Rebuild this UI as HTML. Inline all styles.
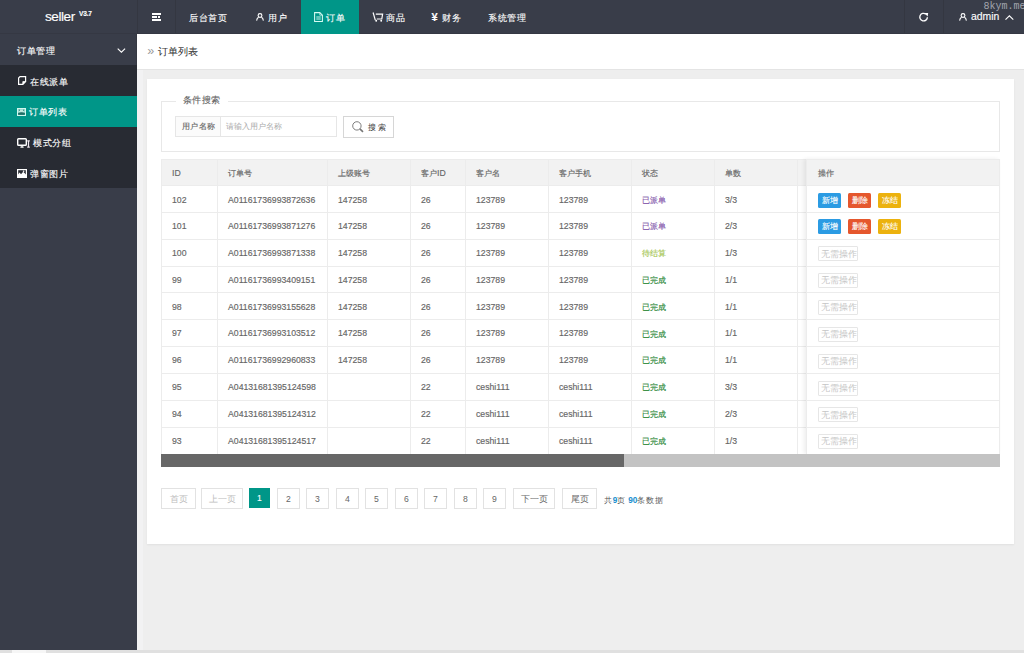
<!DOCTYPE html><html><head><meta charset="utf-8"><style>
*{box-sizing:border-box;margin:0;padding:0}
html,body{width:1024px;height:653px;overflow:hidden;background:#eeeeee;font-family:"Liberation Sans",sans-serif;}
.a{position:absolute}
.t{position:absolute;white-space:nowrap;line-height:1}
.sw{-webkit-text-stroke:0.12px #fff;color:#fff}
svg{position:absolute;overflow:visible}
</style></head><body>
<div class="a" style="left:0;top:0;width:1024px;height:34px;background:#393D49"></div>
<div class="a" style="left:0;top:33px;width:1024px;height:1px;background:#353843"></div>
<div class="t sw" style="left:45px;top:9.8px;font-size:13.6px;letter-spacing:-0.45px">seller</div>
<div class="t sw" style="left:79px;top:11px;font-size:6.6px;font-weight:bold;letter-spacing:-0.2px">V3.7</div>
<div class="a" style="left:137px;top:0;width:1px;height:33px;background:#343741"></div>
<div class="a" style="left:175px;top:0;width:1px;height:33px;background:#343741"></div>
<div class="a" style="left:904px;top:0;width:1px;height:33px;background:#343741"></div>
<div class="a" style="left:943px;top:0;width:1px;height:33px;background:#343741"></div>
<div class="a" style="left:152px;top:13px;width:9px;height:1.7px;background:#fff"></div>
<div class="a" style="left:152px;top:16.2px;width:5px;height:1.8px;background:#fff"></div>
<div class="a" style="left:158px;top:16.2px;width:2.2px;height:1.8px;background:#fff"></div>
<div class="a" style="left:152px;top:19.4px;width:9px;height:1.8px;background:#fff"></div>
<div class="a" style="left:301px;top:0;width:58px;height:34px;background:#009688"></div>
<div class="t sw" style="left:189px;top:12.6px;font-size:9.6px;transform:scale(0.96);transform-origin:0 50%">后台首页</div>
<div class="t sw" style="left:268px;top:12.6px;font-size:9.6px;transform:scale(0.96);transform-origin:0 50%">用户</div>
<div class="t sw" style="left:326px;top:12.6px;font-size:9.6px;transform:scale(0.96);transform-origin:0 50%">订单</div>
<div class="t sw" style="left:386px;top:12.6px;font-size:9.6px;transform:scale(0.96);transform-origin:0 50%">商品</div>
<div class="t sw" style="left:441.5px;top:12.6px;font-size:9.6px;transform:scale(0.96);transform-origin:0 50%">财务</div>
<div class="t sw" style="left:488px;top:12.6px;font-size:9.6px;transform:scale(0.96);transform-origin:0 50%">系统管理</div>
<svg style="left:256px;top:13px" width="8" height="8" viewBox="0 0 8 8"><circle cx="4" cy="2.5" r="1.9" fill="none" stroke="#fff" stroke-width="1.1"/><path d="M0.6 7.6 Q1 5 2.6 4.3 M7.4 7.6 Q7 5 5.4 4.3" fill="none" stroke="#fff" stroke-width="1.1"/></svg>
<svg style="left:314px;top:11.8px" width="9" height="10" viewBox="0 0 9 10"><path d="M0.6 0.6 H5.8 L8.4 3.2 V9.4 H0.6 Z" fill="none" stroke="#d6fbf3" stroke-width="1.05"/><path d="M5.8 0.6 V3.2 H8.4" fill="none" stroke="#d6fbf3" stroke-width="0.7"/><path d="M2.3 5 H6.7 M2.3 7 H6.7" stroke="#c8f3ea" stroke-width="1"/></svg>
<svg style="left:372px;top:12px" width="12" height="10" viewBox="0 0 12 10"><path d="M1.1 0.5 L3.3 8.2" fill="none" stroke="#fff" stroke-width="1.2"/><path d="M3.8 2.2 H10.6 L9.8 7.0 H4.8" fill="none" stroke="#fff" stroke-width="1.2"/><circle cx="4.2" cy="8.7" r="0.95" fill="#fff"/><circle cx="9.2" cy="8.7" r="0.95" fill="#fff"/></svg>
<div class="t sw" style="left:431.5px;top:11.6px;font-size:11px;font-weight:bold">¥</div>
<svg style="left:919px;top:12.4px" width="10" height="10" viewBox="0 0 10 10"><path d="M8.4 5.2 A3.8 3.8 0 1 1 6.9 2.1" fill="none" stroke="#fff" stroke-width="1.35"/><path d="M5.4 1.0 L9.2 0.9 L8.6 4.4 Z" fill="#fff"/></svg>
<svg style="left:958.5px;top:13px" width="8" height="8" viewBox="0 0 8 8"><circle cx="4" cy="2.5" r="1.9" fill="none" stroke="#fff" stroke-width="1.1"/><path d="M0.6 7.6 Q1 5 2.6 4.3 M7.4 7.6 Q7 5 5.4 4.3" fill="none" stroke="#fff" stroke-width="1.1"/></svg>
<div class="t sw" style="left:971px;top:12.4px;font-size:10.4px">admin</div>
<svg style="left:1004.5px;top:15px" width="9" height="5" viewBox="0 0 9 5"><path d="M0.5 4.6 L4.4 0.8 L8.3 4.6" fill="none" stroke="#fff" stroke-width="1.1"/></svg>
<div class="t" style="left:983.5px;top:1.5px;font-size:10px;font-family:'Liberation Mono',monospace;color:#a3a6ae">8kym.me</div>
<div class="a" style="left:0;top:34px;width:137px;height:617px;background:#393D49"></div>
<div class="a" style="left:0;top:65px;width:137px;height:123px;background:#282B33"></div>
<div class="a" style="left:0;top:96px;width:137px;height:31px;background:#009688"></div>
<div class="a" style="left:136px;top:34px;width:1px;height:31px;background:#353842"></div>
<div class="t sw" style="left:17px;top:45.8px;font-size:9.6px;transform:scale(0.95);transform-origin:0 50%">订单管理</div>
<svg style="left:117.4px;top:47.8px" width="10" height="6" viewBox="0 0 10 6"><path d="M0.7 0.7 L4.4 4.2 L8.1 0.7" fill="none" stroke="#fff" stroke-width="1.1"/></svg>
<div class="t sw" style="left:30px;top:76.8px;font-size:9.6px;transform:scale(0.95);transform-origin:0 50%">在线派单</div>
<div class="t sw" style="left:29px;top:107.4px;font-size:9.6px;transform:scale(0.95);transform-origin:0 50%">订单列表</div>
<div class="t sw" style="left:33px;top:138px;font-size:9.6px;transform:scale(0.95);transform-origin:0 50%">模式分组</div>
<div class="t sw" style="left:30px;top:168.8px;font-size:9.6px;transform:scale(0.95);transform-origin:0 50%">弹窗图片</div>
<svg style="left:17.7px;top:76.2px" width="9" height="9" viewBox="0 0 9 9"><path d="M2 0.6 H7.6 V5.6 L4.8 8.4 H0.6 V2 Z" fill="none" stroke="#fff" stroke-width="1.2"/><path d="M4.8 8.4 V5.6 H7.6 Z" fill="#fff" stroke="#fff" stroke-width="0.8"/></svg>
<svg style="left:17px;top:108px" width="9" height="8" viewBox="0 0 9 8"><rect x="0.6" y="0.6" width="7.8" height="6.8" fill="none" stroke="#d2f7ee" stroke-width="1.2"/><path d="M1.2 1.2 H7.8 V4.8 H1.2 Z" fill="#bfe9df"/><circle cx="2.4" cy="2.2" r="0.6" fill="#1f7f74"/><circle cx="6.6" cy="2.2" r="0.6" fill="#1f7f74"/><path d="M1.2 5 Q4.5 3.5 7.8 5 V6.8 H1.2 Z" fill="#246e66"/></svg>
<svg style="left:17px;top:137.5px" width="14" height="10" viewBox="0 0 14 10"><rect x="0.7" y="0.7" width="8.6" height="6.6" rx="0.8" fill="none" stroke="#fff" stroke-width="1.4"/><path d="M3.4 9.2 H6.6 M5 7.4 V9.2" stroke="#fff" stroke-width="1.2"/><path d="M10.2 2.8 H12.8 M11.5 2.8 V9.2 M10.2 9.2 H12.8" stroke="#f0e8f0" stroke-width="1.2"/></svg>
<svg style="left:17px;top:169px" width="10" height="9" viewBox="0 0 10 9"><rect x="0.6" y="0.6" width="8.8" height="7.8" fill="none" stroke="#fff" stroke-width="1.2"/><path d="M1 8 V5.6 L2.6 3.4 L4 5.2 L6.2 2.8 L9 5.4 V8 Z" fill="#fff"/><circle cx="6.6" cy="2.3" r="0.8" fill="#fff"/></svg>
<div class="a" style="left:137px;top:34px;width:887px;height:35px;background:#fff"></div>
<div class="a" style="left:137px;top:69px;width:887px;height:1px;background:#e4e4e4"></div>
<div class="t" style="left:147.2px;top:45.2px;font-size:12.5px;color:#999">»</div>
<div class="t" style="left:158px;top:46.6px;font-size:9.5px;color:#333;-webkit-text-stroke:0.05px #333">订单列表</div>
<div class="a" style="left:137px;top:70px;width:6px;height:580px;background:#f2f2f3"></div>
<div class="a" style="left:147px;top:79px;width:867px;height:464.5px;background:#fff;box-shadow:0 1px 2px rgba(0,0,0,.06)"></div>
<div class="a" style="left:161px;top:101px;width:839px;height:51px;border:1px solid #e8e8e8"></div>
<div class="a" style="left:176px;top:97px;width:52px;height:8px;background:#fff"></div>
<div class="t" style="left:182.5px;top:96.4px;font-size:10px;transform:scale(0.925);transform-origin:0 0;color:#666;-webkit-text-stroke:0.15px #666">条件搜索</div>
<div class="a" style="left:175px;top:116px;width:46px;height:21px;border:1px solid #e6e6e6;background:#FBFBFB"></div>
<div class="t" style="left:181.5px;top:122.2px;font-size:9px;transform:scale(0.935);transform-origin:0 0;color:#666;-webkit-text-stroke:0.15px #666">用户名称</div>
<div class="a" style="left:220px;top:116px;width:117px;height:21px;border:1px solid #e6e6e6;background:#fff"></div>
<div class="t" style="left:226px;top:121.8px;font-size:8.3px;color:#aaa">请输入用户名称</div>
<div class="a" style="left:343px;top:116px;width:51px;height:22px;border:1px solid #d6d6d6;background:#fff"></div>
<svg style="left:351.5px;top:120.5px" width="13" height="12" viewBox="0 0 13 12"><circle cx="4.9" cy="4.9" r="4.2" fill="none" stroke="#666" stroke-width="0.85"/><path d="M7.9 7.9 L11 10.8" stroke="#777" stroke-width="1.6"/></svg>
<div class="t" style="left:368px;top:122.8px;font-size:8.3px;color:#444;letter-spacing:2.4px;-webkit-text-stroke:0.05px #444">搜索</div>
<div class="a" style="left:161px;top:159px;width:839px;height:295px;border:1px solid #ececec;border-bottom:none"></div>
<div class="a" style="left:162px;top:160px;width:837px;height:26px;background:#f2f2f2"></div>
<div class="a" style="left:162px;top:185px;width:837px;height:1px;background:#ececec"></div>
<div class="a" style="left:162px;top:212px;width:837px;height:1px;background:#ececec"></div>
<div class="a" style="left:162px;top:239px;width:837px;height:1px;background:#ececec"></div>
<div class="a" style="left:162px;top:266px;width:837px;height:1px;background:#ececec"></div>
<div class="a" style="left:162px;top:292px;width:837px;height:1px;background:#ececec"></div>
<div class="a" style="left:162px;top:319px;width:837px;height:1px;background:#ececec"></div>
<div class="a" style="left:162px;top:346px;width:837px;height:1px;background:#ececec"></div>
<div class="a" style="left:162px;top:373px;width:837px;height:1px;background:#ececec"></div>
<div class="a" style="left:162px;top:400px;width:837px;height:1px;background:#ececec"></div>
<div class="a" style="left:162px;top:427px;width:837px;height:1px;background:#ececec"></div>
<div class="a" style="left:217px;top:159px;width:1px;height:295px;background:#ececec"></div>
<div class="a" style="left:327px;top:159px;width:1px;height:295px;background:#ececec"></div>
<div class="a" style="left:410px;top:159px;width:1px;height:295px;background:#ececec"></div>
<div class="a" style="left:465px;top:159px;width:1px;height:295px;background:#ececec"></div>
<div class="a" style="left:548px;top:159px;width:1px;height:295px;background:#ececec"></div>
<div class="a" style="left:631px;top:159px;width:1px;height:295px;background:#ececec"></div>
<div class="a" style="left:714px;top:159px;width:1px;height:295px;background:#ececec"></div>
<div class="a" style="left:797px;top:159px;width:1px;height:295px;background:#ececec"></div>
<div class="a" style="left:806px;top:159px;width:194px;height:295px;box-shadow:-2px 0 4px rgba(0,0,0,.07);border-left:1px solid #ececec"></div>
<div class="a" style="left:807px;top:160px;width:192px;height:26px;background:#f2f2f2"></div>
<div class="a" style="left:807px;top:185px;width:192px;height:1px;background:#ececec"></div>
<div class="a" style="left:807px;top:212px;width:192px;height:1px;background:#ececec"></div>
<div class="a" style="left:807px;top:239px;width:192px;height:1px;background:#ececec"></div>
<div class="a" style="left:807px;top:266px;width:192px;height:1px;background:#ececec"></div>
<div class="a" style="left:807px;top:292px;width:192px;height:1px;background:#ececec"></div>
<div class="a" style="left:807px;top:319px;width:192px;height:1px;background:#ececec"></div>
<div class="a" style="left:807px;top:346px;width:192px;height:1px;background:#ececec"></div>
<div class="a" style="left:807px;top:373px;width:192px;height:1px;background:#ececec"></div>
<div class="a" style="left:807px;top:400px;width:192px;height:1px;background:#ececec"></div>
<div class="a" style="left:807px;top:427px;width:192px;height:1px;background:#ececec"></div>
<div class="t" style="left:172px;top:168.6px;font-size:8.7px;color:#666;-webkit-text-stroke:0.15px #666">ID</div>
<div class="t" style="left:228px;top:168.6px;font-size:8.7px;color:#666;-webkit-text-stroke:0.15px #666"><span style="font-size:8.3px">订单号</span></div>
<div class="t" style="left:338px;top:168.6px;font-size:8.7px;color:#666;-webkit-text-stroke:0.15px #666"><span style="font-size:8.3px">上级账号</span></div>
<div class="t" style="left:421px;top:168.6px;font-size:8.7px;color:#666;-webkit-text-stroke:0.15px #666"><span style="font-size:8.3px">客户</span>ID</div>
<div class="t" style="left:476px;top:168.6px;font-size:8.7px;color:#666;-webkit-text-stroke:0.15px #666"><span style="font-size:8.3px">客户名</span></div>
<div class="t" style="left:559px;top:168.6px;font-size:8.7px;color:#666;-webkit-text-stroke:0.15px #666"><span style="font-size:8.3px">客户手机</span></div>
<div class="t" style="left:642px;top:168.6px;font-size:8.7px;color:#666;-webkit-text-stroke:0.15px #666"><span style="font-size:8.3px">状态</span></div>
<div class="t" style="left:725px;top:168.6px;font-size:8.7px;color:#666;-webkit-text-stroke:0.15px #666"><span style="font-size:8.3px">单数</span></div>
<div class="t" style="left:817.5px;top:168.6px;font-size:8.3px;color:#666;-webkit-text-stroke:0.15px #666">操作</div>
<div class="t" style="left:172px;top:195.6px;font-size:8.7px;color:#666;-webkit-text-stroke:0.15px #666">102</div>
<div class="t" style="left:228px;top:195.6px;font-size:8.7px;color:#666;-webkit-text-stroke:0.15px #666">A01161736993872636</div>
<div class="t" style="left:338px;top:195.6px;font-size:8.7px;color:#666;-webkit-text-stroke:0.15px #666">147258</div>
<div class="t" style="left:421px;top:195.6px;font-size:8.7px;color:#666;-webkit-text-stroke:0.15px #666">26</div>
<div class="t" style="left:476px;top:195.6px;font-size:8.7px;color:#666;-webkit-text-stroke:0.15px #666">123789</div>
<div class="t" style="left:559px;top:195.6px;font-size:8.7px;color:#666;-webkit-text-stroke:0.15px #666">123789</div>
<div class="t" style="left:642px;top:195.8px;font-size:8.3px;color:#8659ac;-webkit-text-stroke:0.15px #8659ac">已派单</div>
<div class="t" style="left:725px;top:195.6px;font-size:8.7px;color:#666;-webkit-text-stroke:0.15px #666">3/3</div>
<div class="a" style="left:818px;top:193.0px;width:23px;height:15px;background:#2b9be3;border-radius:1.5px"></div>
<div class="t sw" style="left:821.5px;top:196.6px;font-size:8px">新增</div>
<div class="a" style="left:848px;top:193.0px;width:23px;height:15px;background:#e5572d;border-radius:1.5px"></div>
<div class="t sw" style="left:851.5px;top:196.6px;font-size:8px">删除</div>
<div class="a" style="left:878px;top:193.0px;width:23px;height:15px;background:#ecb20e;border-radius:1.5px"></div>
<div class="t sw" style="left:881.5px;top:196.6px;font-size:8px">冻结</div>
<div class="t" style="left:172px;top:222.0px;font-size:8.7px;color:#666;-webkit-text-stroke:0.15px #666">101</div>
<div class="t" style="left:228px;top:222.0px;font-size:8.7px;color:#666;-webkit-text-stroke:0.15px #666">A01161736993871276</div>
<div class="t" style="left:338px;top:222.0px;font-size:8.7px;color:#666;-webkit-text-stroke:0.15px #666">147258</div>
<div class="t" style="left:421px;top:222.0px;font-size:8.7px;color:#666;-webkit-text-stroke:0.15px #666">26</div>
<div class="t" style="left:476px;top:222.0px;font-size:8.7px;color:#666;-webkit-text-stroke:0.15px #666">123789</div>
<div class="t" style="left:559px;top:222.0px;font-size:8.7px;color:#666;-webkit-text-stroke:0.15px #666">123789</div>
<div class="t" style="left:642px;top:222.2px;font-size:8.3px;color:#8659ac;-webkit-text-stroke:0.15px #8659ac">已派单</div>
<div class="t" style="left:725px;top:222.0px;font-size:8.7px;color:#666;-webkit-text-stroke:0.15px #666">2/3</div>
<div class="a" style="left:818px;top:219.4px;width:23px;height:15px;background:#2b9be3;border-radius:1.5px"></div>
<div class="t sw" style="left:821.5px;top:223.0px;font-size:8px">新增</div>
<div class="a" style="left:848px;top:219.4px;width:23px;height:15px;background:#e5572d;border-radius:1.5px"></div>
<div class="t sw" style="left:851.5px;top:223.0px;font-size:8px">删除</div>
<div class="a" style="left:878px;top:219.4px;width:23px;height:15px;background:#ecb20e;border-radius:1.5px"></div>
<div class="t sw" style="left:881.5px;top:223.0px;font-size:8px">冻结</div>
<div class="t" style="left:172px;top:248.9px;font-size:8.7px;color:#666;-webkit-text-stroke:0.15px #666">100</div>
<div class="t" style="left:228px;top:248.9px;font-size:8.7px;color:#666;-webkit-text-stroke:0.15px #666">A01161736993871338</div>
<div class="t" style="left:338px;top:248.9px;font-size:8.7px;color:#666;-webkit-text-stroke:0.15px #666">147258</div>
<div class="t" style="left:421px;top:248.9px;font-size:8.7px;color:#666;-webkit-text-stroke:0.15px #666">26</div>
<div class="t" style="left:476px;top:248.9px;font-size:8.7px;color:#666;-webkit-text-stroke:0.15px #666">123789</div>
<div class="t" style="left:559px;top:248.9px;font-size:8.7px;color:#666;-webkit-text-stroke:0.15px #666">123789</div>
<div class="t" style="left:642px;top:249.1px;font-size:8.3px;color:#a6c653;-webkit-text-stroke:0.15px #a6c653">待结算</div>
<div class="t" style="left:725px;top:248.9px;font-size:8.7px;color:#666;-webkit-text-stroke:0.15px #666">1/3</div>
<div class="a" style="left:818px;top:246.3px;width:40px;height:15px;border:1px solid #e6e6e6;background:#fff;border-radius:1px"></div>
<div class="t" style="left:820.5px;top:249.5px;font-size:8.8px;color:#c6c6c6">无需操作</div>
<div class="t" style="left:172px;top:275.7px;font-size:8.7px;color:#666;-webkit-text-stroke:0.15px #666">99</div>
<div class="t" style="left:228px;top:275.7px;font-size:8.7px;color:#666;-webkit-text-stroke:0.15px #666">A01161736993409151</div>
<div class="t" style="left:338px;top:275.7px;font-size:8.7px;color:#666;-webkit-text-stroke:0.15px #666">147258</div>
<div class="t" style="left:421px;top:275.7px;font-size:8.7px;color:#666;-webkit-text-stroke:0.15px #666">26</div>
<div class="t" style="left:476px;top:275.7px;font-size:8.7px;color:#666;-webkit-text-stroke:0.15px #666">123789</div>
<div class="t" style="left:559px;top:275.7px;font-size:8.7px;color:#666;-webkit-text-stroke:0.15px #666">123789</div>
<div class="t" style="left:642px;top:275.9px;font-size:8.3px;color:#2f8a3a;-webkit-text-stroke:0.15px #2f8a3a">已完成</div>
<div class="t" style="left:725px;top:275.7px;font-size:8.7px;color:#666;-webkit-text-stroke:0.15px #666">1/1</div>
<div class="a" style="left:818px;top:273.1px;width:40px;height:15px;border:1px solid #e6e6e6;background:#fff;border-radius:1px"></div>
<div class="t" style="left:820.5px;top:276.3px;font-size:8.8px;color:#c6c6c6">无需操作</div>
<div class="t" style="left:172px;top:302.6px;font-size:8.7px;color:#666;-webkit-text-stroke:0.15px #666">98</div>
<div class="t" style="left:228px;top:302.6px;font-size:8.7px;color:#666;-webkit-text-stroke:0.15px #666">A01161736993155628</div>
<div class="t" style="left:338px;top:302.6px;font-size:8.7px;color:#666;-webkit-text-stroke:0.15px #666">147258</div>
<div class="t" style="left:421px;top:302.6px;font-size:8.7px;color:#666;-webkit-text-stroke:0.15px #666">26</div>
<div class="t" style="left:476px;top:302.6px;font-size:8.7px;color:#666;-webkit-text-stroke:0.15px #666">123789</div>
<div class="t" style="left:559px;top:302.6px;font-size:8.7px;color:#666;-webkit-text-stroke:0.15px #666">123789</div>
<div class="t" style="left:642px;top:302.8px;font-size:8.3px;color:#2f8a3a;-webkit-text-stroke:0.15px #2f8a3a">已完成</div>
<div class="t" style="left:725px;top:302.6px;font-size:8.7px;color:#666;-webkit-text-stroke:0.15px #666">1/1</div>
<div class="a" style="left:818px;top:300.0px;width:40px;height:15px;border:1px solid #e6e6e6;background:#fff;border-radius:1px"></div>
<div class="t" style="left:820.5px;top:303.2px;font-size:8.8px;color:#c6c6c6">无需操作</div>
<div class="t" style="left:172px;top:329.4px;font-size:8.7px;color:#666;-webkit-text-stroke:0.15px #666">97</div>
<div class="t" style="left:228px;top:329.4px;font-size:8.7px;color:#666;-webkit-text-stroke:0.15px #666">A01161736993103512</div>
<div class="t" style="left:338px;top:329.4px;font-size:8.7px;color:#666;-webkit-text-stroke:0.15px #666">147258</div>
<div class="t" style="left:421px;top:329.4px;font-size:8.7px;color:#666;-webkit-text-stroke:0.15px #666">26</div>
<div class="t" style="left:476px;top:329.4px;font-size:8.7px;color:#666;-webkit-text-stroke:0.15px #666">123789</div>
<div class="t" style="left:559px;top:329.4px;font-size:8.7px;color:#666;-webkit-text-stroke:0.15px #666">123789</div>
<div class="t" style="left:642px;top:329.6px;font-size:8.3px;color:#2f8a3a;-webkit-text-stroke:0.15px #2f8a3a">已完成</div>
<div class="t" style="left:725px;top:329.4px;font-size:8.7px;color:#666;-webkit-text-stroke:0.15px #666">1/1</div>
<div class="a" style="left:818px;top:326.8px;width:40px;height:15px;border:1px solid #e6e6e6;background:#fff;border-radius:1px"></div>
<div class="t" style="left:820.5px;top:330.0px;font-size:8.8px;color:#c6c6c6">无需操作</div>
<div class="t" style="left:172px;top:356.2px;font-size:8.7px;color:#666;-webkit-text-stroke:0.15px #666">96</div>
<div class="t" style="left:228px;top:356.2px;font-size:8.7px;color:#666;-webkit-text-stroke:0.15px #666">A01161736992960833</div>
<div class="t" style="left:338px;top:356.2px;font-size:8.7px;color:#666;-webkit-text-stroke:0.15px #666">147258</div>
<div class="t" style="left:421px;top:356.2px;font-size:8.7px;color:#666;-webkit-text-stroke:0.15px #666">26</div>
<div class="t" style="left:476px;top:356.2px;font-size:8.7px;color:#666;-webkit-text-stroke:0.15px #666">123789</div>
<div class="t" style="left:559px;top:356.2px;font-size:8.7px;color:#666;-webkit-text-stroke:0.15px #666">123789</div>
<div class="t" style="left:642px;top:356.4px;font-size:8.3px;color:#2f8a3a;-webkit-text-stroke:0.15px #2f8a3a">已完成</div>
<div class="t" style="left:725px;top:356.2px;font-size:8.7px;color:#666;-webkit-text-stroke:0.15px #666">1/1</div>
<div class="a" style="left:818px;top:353.6px;width:40px;height:15px;border:1px solid #e6e6e6;background:#fff;border-radius:1px"></div>
<div class="t" style="left:820.5px;top:356.8px;font-size:8.8px;color:#c6c6c6">无需操作</div>
<div class="t" style="left:172px;top:383.1px;font-size:8.7px;color:#666;-webkit-text-stroke:0.15px #666">95</div>
<div class="t" style="left:228px;top:383.1px;font-size:8.7px;color:#666;-webkit-text-stroke:0.15px #666">A04131681395124598</div>
<div class="t" style="left:421px;top:383.1px;font-size:8.7px;color:#666;-webkit-text-stroke:0.15px #666">22</div>
<div class="t" style="left:476px;top:383.1px;font-size:8.7px;color:#666;-webkit-text-stroke:0.15px #666">ceshi111</div>
<div class="t" style="left:559px;top:383.1px;font-size:8.7px;color:#666;-webkit-text-stroke:0.15px #666">ceshi111</div>
<div class="t" style="left:642px;top:383.3px;font-size:8.3px;color:#2f8a3a;-webkit-text-stroke:0.15px #2f8a3a">已完成</div>
<div class="t" style="left:725px;top:383.1px;font-size:8.7px;color:#666;-webkit-text-stroke:0.15px #666">3/3</div>
<div class="a" style="left:818px;top:380.5px;width:40px;height:15px;border:1px solid #e6e6e6;background:#fff;border-radius:1px"></div>
<div class="t" style="left:820.5px;top:383.7px;font-size:8.8px;color:#c6c6c6">无需操作</div>
<div class="t" style="left:172px;top:409.9px;font-size:8.7px;color:#666;-webkit-text-stroke:0.15px #666">94</div>
<div class="t" style="left:228px;top:409.9px;font-size:8.7px;color:#666;-webkit-text-stroke:0.15px #666">A04131681395124312</div>
<div class="t" style="left:421px;top:409.9px;font-size:8.7px;color:#666;-webkit-text-stroke:0.15px #666">22</div>
<div class="t" style="left:476px;top:409.9px;font-size:8.7px;color:#666;-webkit-text-stroke:0.15px #666">ceshi111</div>
<div class="t" style="left:559px;top:409.9px;font-size:8.7px;color:#666;-webkit-text-stroke:0.15px #666">ceshi111</div>
<div class="t" style="left:642px;top:410.1px;font-size:8.3px;color:#2f8a3a;-webkit-text-stroke:0.15px #2f8a3a">已完成</div>
<div class="t" style="left:725px;top:409.9px;font-size:8.7px;color:#666;-webkit-text-stroke:0.15px #666">2/3</div>
<div class="a" style="left:818px;top:407.3px;width:40px;height:15px;border:1px solid #e6e6e6;background:#fff;border-radius:1px"></div>
<div class="t" style="left:820.5px;top:410.5px;font-size:8.8px;color:#c6c6c6">无需操作</div>
<div class="t" style="left:172px;top:436.8px;font-size:8.7px;color:#666;-webkit-text-stroke:0.15px #666">93</div>
<div class="t" style="left:228px;top:436.8px;font-size:8.7px;color:#666;-webkit-text-stroke:0.15px #666">A04131681395124517</div>
<div class="t" style="left:421px;top:436.8px;font-size:8.7px;color:#666;-webkit-text-stroke:0.15px #666">22</div>
<div class="t" style="left:476px;top:436.8px;font-size:8.7px;color:#666;-webkit-text-stroke:0.15px #666">ceshi111</div>
<div class="t" style="left:559px;top:436.8px;font-size:8.7px;color:#666;-webkit-text-stroke:0.15px #666">ceshi111</div>
<div class="t" style="left:642px;top:437.0px;font-size:8.3px;color:#2f8a3a;-webkit-text-stroke:0.15px #2f8a3a">已完成</div>
<div class="t" style="left:725px;top:436.8px;font-size:8.7px;color:#666;-webkit-text-stroke:0.15px #666">1/3</div>
<div class="a" style="left:818px;top:434.2px;width:40px;height:15px;border:1px solid #e6e6e6;background:#fff;border-radius:1px"></div>
<div class="t" style="left:820.5px;top:437.4px;font-size:8.8px;color:#c6c6c6">无需操作</div>
<div class="a" style="left:161px;top:454px;width:839px;height:13px;background:#c3c3c3"></div>
<div class="a" style="left:161px;top:454px;width:463px;height:13px;background:#676767"></div>
<div class="a" style="left:161px;top:488px;width:35px;height:21px;border:1px solid #e2e2e2;background:#fff;color:#bdbdbd;font-size:8.6px;line-height:20.5px;text-align:center"><span style="font-size:8.6px">首页</span></div>
<div class="a" style="left:201px;top:488px;width:42px;height:21px;border:1px solid #e2e2e2;background:#fff;color:#bdbdbd;font-size:8.6px;line-height:20.5px;text-align:center"><span style="font-size:8.6px">上一页</span></div>
<div class="a" style="left:249px;top:488px;width:21px;height:19.5px;background:#009688"></div>
<div class="a sw" style="left:249px;top:488px;width:21px;height:20px;font-size:8.6px;line-height:20.5px;text-align:center">1</div>
<div class="a" style="left:277px;top:488px;width:23px;height:21px;border:1px solid #e2e2e2;background:#fff;color:#666;font-size:8.6px;line-height:20.5px;text-align:center">2</div>
<div class="a" style="left:306px;top:488px;width:23px;height:21px;border:1px solid #e2e2e2;background:#fff;color:#666;font-size:8.6px;line-height:20.5px;text-align:center">3</div>
<div class="a" style="left:336px;top:488px;width:23px;height:21px;border:1px solid #e2e2e2;background:#fff;color:#666;font-size:8.6px;line-height:20.5px;text-align:center">4</div>
<div class="a" style="left:365px;top:488px;width:23px;height:21px;border:1px solid #e2e2e2;background:#fff;color:#666;font-size:8.6px;line-height:20.5px;text-align:center">5</div>
<div class="a" style="left:395px;top:488px;width:23px;height:21px;border:1px solid #e2e2e2;background:#fff;color:#666;font-size:8.6px;line-height:20.5px;text-align:center">6</div>
<div class="a" style="left:424px;top:488px;width:23px;height:21px;border:1px solid #e2e2e2;background:#fff;color:#666;font-size:8.6px;line-height:20.5px;text-align:center">7</div>
<div class="a" style="left:454px;top:488px;width:23px;height:21px;border:1px solid #e2e2e2;background:#fff;color:#666;font-size:8.6px;line-height:20.5px;text-align:center">8</div>
<div class="a" style="left:483px;top:488px;width:23px;height:21px;border:1px solid #e2e2e2;background:#fff;color:#666;font-size:8.6px;line-height:20.5px;text-align:center">9</div>
<div class="a" style="left:513px;top:488px;width:42px;height:21px;border:1px solid #e2e2e2;background:#fff;color:#666;font-size:8.6px;line-height:20.5px;text-align:center"><span style="font-size:8.6px">下一页</span></div>
<div class="a" style="left:562px;top:488px;width:35px;height:21px;border:1px solid #e2e2e2;background:#fff;color:#666;font-size:8.6px;line-height:20.5px;text-align:center"><span style="font-size:8.6px">尾页</span></div>
<div class="t" style="left:603.5px;top:495.8px;font-size:8.6px;transform:scale(0.96);transform-origin:0 0;color:#555"><span style="font-size:8.6px">共</span><b style="color:#1a8fd0">9</b><span style="font-size:8.6px">页</span> <b style="color:#1a8fd0">90</b><span style="font-size:8.6px">条数据</span></div>
<div class="a" style="left:0;top:650px;width:1024px;height:3px;background:#e0e0e0"></div>
<div class="a" style="left:12px;top:650px;width:34px;height:3px;background:#f6f6f6"></div>
</body></html>
